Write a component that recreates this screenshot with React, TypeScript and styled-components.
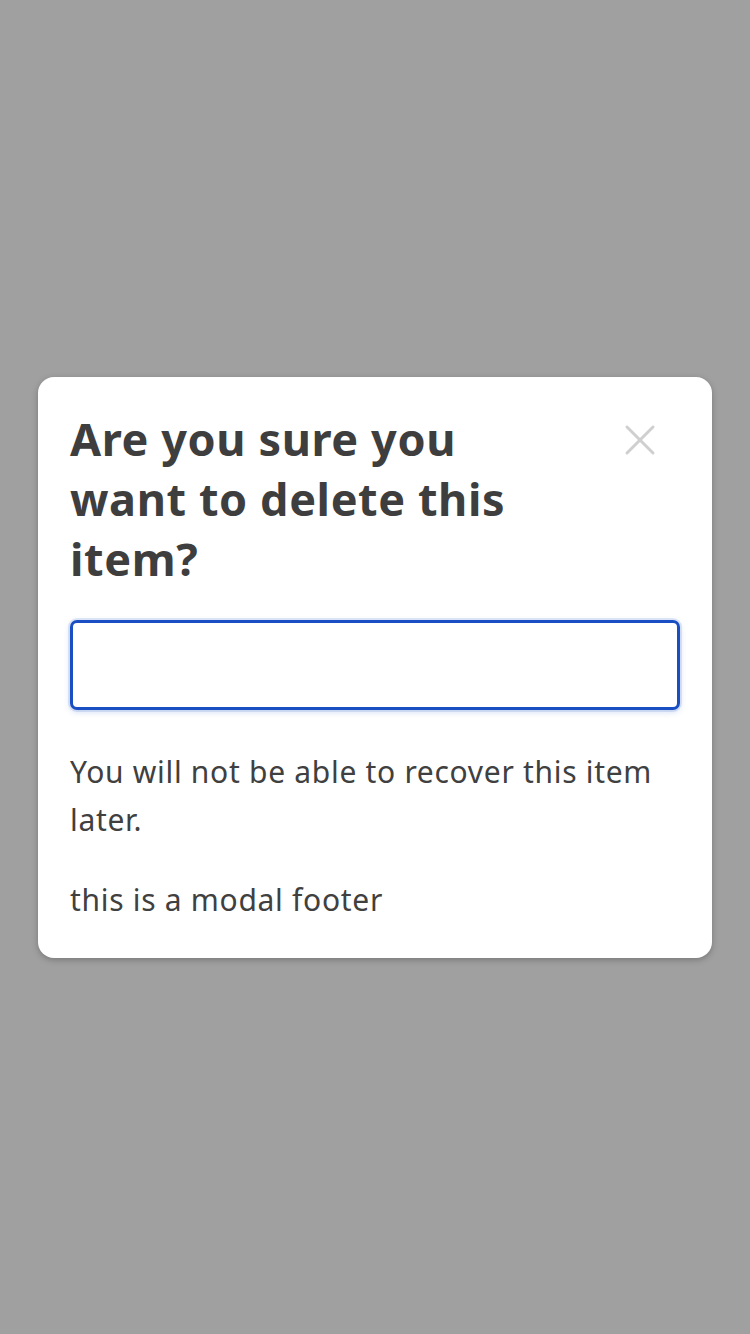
import styled, { createGlobalStyle } from "styled-components";

const GlobalStyle = createGlobalStyle`
  html, body {
    margin: 0;
    padding: 0;
  }
  body {
    font-family: "Noto Sans", "DejaVu Sans", sans-serif;
    color: #404040;
  }
`;

const Overlay = styled.div`
  min-height: 100vh;
  background: #a0a0a0;
  display: flex;
  align-items: center;
  justify-content: center;
  padding: 0 38px;
  box-sizing: border-box;
`;

const Modal = styled.div`
  width: 100%;
  background: #fff;
  border-radius: 16px;
  box-shadow: 0 2px 6px rgba(0, 0, 0, 0.25);
  padding: 32px 32px 34px;
  box-sizing: border-box;
  display: flex;
  flex-direction: column;
`;

const Header = styled.div`
  display: flex;
  justify-content: space-between;
  align-items: flex-start;
`;

const Title = styled.h2`
  margin: 0;
  font-size: 45px;
  line-height: 60px;
  font-weight: 700;
  letter-spacing: 0.6px;
  color: #3e3e3e;
  max-width: 470px;
`;

const CloseButton = styled.button`
  border: none;
  background: none;
  padding: 0;
  margin: 13px 22px 0 0;
  width: 36px;
  height: 36px;
  cursor: pointer;
  color: #cfcfcf;
  display: flex;
  align-items: center;
  justify-content: center;
`;

const Input = styled.input`
  margin-top: 31px;
  height: 90px;
  border: 3px solid #1a4fc4;
  border-radius: 7px;
  box-shadow: 0 0 0 2px rgba(26, 79, 196, 0.12), 0 2px 6px rgba(26, 79, 196, 0.2);
  outline: none;
  padding: 0 16px;
  font-size: 30px;
  box-sizing: border-box;
  width: 100%;
`;

const Body = styled.p`
  margin: 38px 0 0;
  font-size: 30px;
  line-height: 48px;
  letter-spacing: 0.7px;
  color: #404040;
`;

const Footer = styled.div`
  margin-top: 32px;
  font-size: 30px;
  line-height: 48px;
  letter-spacing: 0.7px;
  color: #404040;
`;

function App() {
  return (
    <>
      <GlobalStyle />
      <Overlay>
        <Modal>
          <Header>
            <Title>Are you sure you want to delete this item?</Title>
            <CloseButton aria-label="close">
              <svg width="32" height="32" viewBox="0 0 32 32">
                <path
                  d="M3 3 L29 29 M29 3 L3 29"
                  stroke="currentColor"
                  strokeWidth="3"
                  strokeLinecap="round"
                />
              </svg>
            </CloseButton>
          </Header>
          <Input autoFocus />
          <Body>You will not be able to recover this item later.</Body>
          <Footer>this is a modal footer</Footer>
        </Modal>
      </Overlay>
    </>
  );
}

export default App;
